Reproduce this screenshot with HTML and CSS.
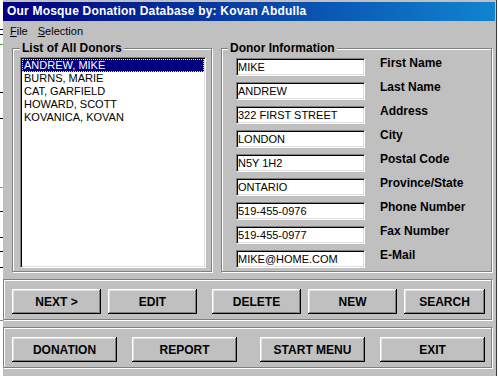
FILE: index.html
```html
<!DOCTYPE html>
<html lang="en">
<head>
    <meta charset="UTF-8">
    <title>Our Mosque Donation Database</title>
    <link rel="stylesheet" href="styles.css">
</head>
<body>

    <div class="screen">
        <div class="edge"></div>

        <div class="window">
            <div class="titlebar">Our Mosque Donation Database by: Kovan Abdulla</div>

            <div class="menubar">
                <span class="menu-item"><u>F</u>ile</span>
                <span class="menu-item"><u>S</u>election</span>
            </div>

            <div class="main">
                <fieldset class="group donors">
                    <legend>List of All Donors</legend>
                    <ul class="listbox">
                        <li class="selected">ANDREW, MIKE</li>
                        <li>BURNS, MARIE</li>
                        <li>CAT, GARFIELD</li>
                        <li>HOWARD, SCOTT</li>
                        <li>KOVANICA, KOVAN</li>
                    </ul>
                </fieldset>

                <fieldset class="group info">
                    <legend>Donor Information</legend>
                    <div class="fields">
                        <div class="field"><div class="textbox">MIKE</div><span class="label">First Name</span></div>
                        <div class="field"><div class="textbox">ANDREW</div><span class="label">Last Name</span></div>
                        <div class="field"><div class="textbox">322 FIRST STREET</div><span class="label">Address</span></div>
                        <div class="field"><div class="textbox">LONDON</div><span class="label">City</span></div>
                        <div class="field"><div class="textbox">N5Y 1H2</div><span class="label">Postal Code</span></div>
                        <div class="field"><div class="textbox">ONTARIO</div><span class="label">Province/State</span></div>
                        <div class="field"><div class="textbox">519-455-0976</div><span class="label">Phone Number</span></div>
                        <div class="field"><div class="textbox">519-455-0977</div><span class="label">Fax Number</span></div>
                        <div class="field"><div class="textbox">MIKE@HOME.COM</div><span class="label">E-Mail</span></div>
                    </div>
                </fieldset>
            </div>

            <div class="panel nav">
                <button class="btn">NEXT &gt;</button>
                <button class="btn">EDIT</button>
                <button class="btn sep">DELETE</button>
                <button class="btn">NEW</button>
                <button class="btn small">SEARCH</button>
            </div>

            <div class="panel actions">
                <button class="btn">DONATION</button>
                <button class="btn">REPORT</button>
                <button class="btn sep">START MENU</button>
                <button class="btn">EXIT</button>
            </div>
        </div>
    </div>

</body>
</html>
```

FILE: styles.css
```css
body {
    margin: 0;
    padding: 0;
    background: #f4f4f4;
    font-family: 'Liberation Sans', Arial, sans-serif;
    color: #000;
}
.screen {
    display: flex;
    height: 376px;
    overflow: hidden;
}
/* bits of the IDE peeking out behind the window */
.edge {
    width: 3px;
    flex-shrink: 0;
    background:
        linear-gradient(#000, #000) 0 29px / 3px 1px no-repeat,
        linear-gradient(#000, #000) 0 34px / 3px 1px no-repeat,
        linear-gradient(#3a3, #3a3) 0 44px / 3px 1px no-repeat,
        linear-gradient(#000, #000) 0 92px / 3px 1px no-repeat,
        linear-gradient(#000, #000) 0 118px / 3px 1px no-repeat,
        linear-gradient(#888, #888) 0 187px / 3px 1px no-repeat,
        linear-gradient(#00c, #00c) 0 211px / 3px 1px no-repeat,
        linear-gradient(#00c, #00c) 0 237px / 3px 1px no-repeat,
        linear-gradient(#000, #000) 0 251px / 3px 1px no-repeat,
        linear-gradient(#000, #000) 0 267px / 3px 1px no-repeat,
        linear-gradient(#888, #888) 0 320px / 3px 1px no-repeat,
        #fff;
}
.window {
    width: 493px;
    flex-shrink: 0;
    background: #c0c0c0;
    border-right: 1px solid #404040;
}
.titlebar {
    height: 19px;
    line-height: 19px;
    margin: 2px 1px 0 0;
    padding-left: 4px;
    color: #fff;
    font-size: 12px;
    font-weight: bold;
    letter-spacing: 0.2px;
    white-space: nowrap;
    background: linear-gradient(to right, #000080, #1084d0);
}
.menubar {
    display: flex;
    height: 18px;
    line-height: 18px;
    padding: 1px 0 0 7px;
    font-size: 11px;
}
.menu-item {
    margin-right: 10px;
}
.main {
    display: flex;
    margin-top: 1px;
}
.group {
    margin: 0 0 0 9px;
    padding: 0;
    min-width: 0;
    box-sizing: border-box;
    border: 1px solid #808080;
    box-shadow: inset 1px 1px 0 #fff, 1px 1px 0 #fff;
}
.group legend {
    margin-left: 7px;
    padding: 0 2px;
    font-size: 12px;
    font-weight: bold;
    line-height: 14px;
    background: #c0c0c0;
}
.donors {
    width: 200px;
}
.info {
    width: 271px;
}
.info legend {
    margin-left: 6px;
}
.listbox {
    list-style: none;
    margin: 2px 0 3px 7px;
    padding: 0;
    width: 186px;
    height: 211px;
    box-sizing: border-box;
    background: #fff;
    border-top: 1px solid #808080;
    border-left: 1px solid #808080;
    border-bottom: 1px solid #fff;
    border-right: 1px solid #fff;
    box-shadow: inset 1px 1px 0 #000, inset -1px -1px 0 #dfdfdf;
    padding: 1px;
    font-size: 11px;
    line-height: 13px;
}
.listbox li {
    padding-left: 2px;
    white-space: nowrap;
}
.listbox li.selected {
    background: #000080;
    color: #fff;
    outline: 1px dotted #e8e860;
    outline-offset: -1px;
}
.fields {
    display: flex;
    flex-direction: column;
    gap: 6px;
    padding: 3px 0 0 14px;
}
.field {
    display: flex;
    align-items: flex-start;
}
.textbox {
    width: 129px;
    height: 18px;
    box-sizing: border-box;
    background: #fff;
    border-top: 1px solid #808080;
    border-left: 1px solid #808080;
    border-bottom: 1px solid #fff;
    border-right: 1px solid #fff;
    box-shadow: inset 1px 1px 0 #000, inset -1px -1px 0 #dfdfdf;
    padding: 1px 1px 0 1px;
    font-size: 11px;
    line-height: 15px;
    white-space: nowrap;
    overflow: hidden;
}
.label {
    margin-left: 15px;
    font-size: 12px;
    font-weight: bold;
    line-height: 10px;
    white-space: nowrap;
}
.panel {
    display: flex;
    align-items: flex-start;
    width: 489px;
    height: 41px;
    box-sizing: border-box;
    margin-top: 7px;
    padding: 9px 0 0 8px;
    border: 1px solid #808080;
    box-shadow: inset 1px 1px 0 #fff, 1px 1px 0 #fff;
}
.btn {
    height: 25px;
    padding: 0;
    border: none;
    background: #c0c0c0;
    color: #000;
    font-family: 'Liberation Sans', Arial, sans-serif;
    font-size: 12px;
    font-weight: bold;
    box-shadow: inset -1px -1px 0 #000, inset 1px 1px 0 #fff, inset -2px -2px 0 #808080, inset 2px 2px 0 #dfdfdf;
    cursor: pointer;
}
.nav .btn {
    width: 89px;
}
.nav .btn + .btn {
    margin-left: 7px;
}
.nav .btn.sep {
    margin-left: 15px;
}
.nav .btn.small {
    width: 81px;
}
.actions .btn {
    width: 105px;
}
.actions .btn + .btn {
    margin-left: 15px;
}
.actions .btn.sep {
    margin-left: 23px;
}
```
